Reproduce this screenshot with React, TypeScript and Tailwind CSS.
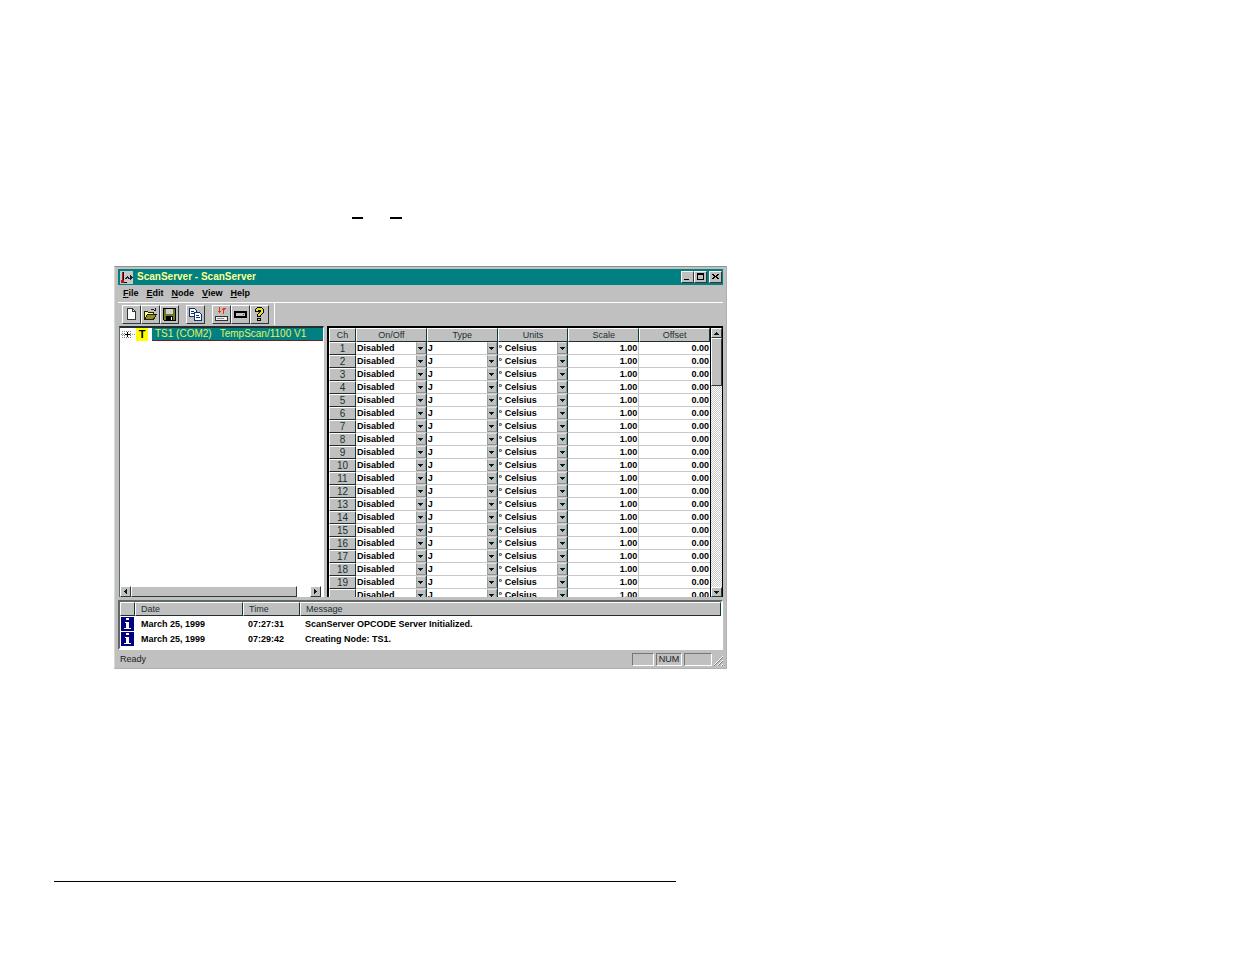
import type { ReactNode } from "react";

const raised = "border border-t-white border-l-white border-r-[#303838] border-b-[#303838] bg-[#c0c0c0]";
const sunken = "border border-t-[#707878] border-l-[#707878] border-r-white border-b-white";
const headCell = "border-t border-l border-r border-b border-t-white border-l-white border-r-[#103838] border-b-[#203030] bg-[#c0c0c0]";

const menus = ["File", "Edit", "Node", "View", "Help"];
const channels = Array.from({ length: 20 }, (_, i) => i + 1);
const log = [
  { date: "March 25, 1999", time: "07:27:31", message: "ScanServer OPCODE Server Initialized." },
  { date: "March 25, 1999", time: "07:29:42", message: "Creating Node: TS1." },
];

function Arrow({ dir }: { dir: "up" | "down" | "left" | "right" }) {
  const paths = {
    up: "M3 2h1v1h1v1h1v1H1V4h1V3h1z",
    down: "M1 2h5v1H5v1H4v1H3V4H2V3H1z",
    left: "M4 1h1v5H4V5H3V4H2V3h1V2h1z",
    right: "M2 1h1v1h1v1h1v1H4v1H3v1H2z",
  };
  return (
    <svg width="7" height="7" viewBox="0 0 7 7" shapeRendering="crispEdges" aria-hidden="true">
      <path d={paths[dir]} fill="#002020" />
    </svg>
  );
}

function WindowButton({ label, children }: { label: string; children: ReactNode }) {
  return (
    <button type="button" aria-label={label} className={`${raised} flex h-3 w-[13px] items-center justify-center`}>
      <svg width="9" height="8" viewBox="0 0 9 8" shapeRendering="crispEdges" className="flex-none">
        {children}
      </svg>
    </button>
  );
}

function Tool({ label, children }: { label: string; children: ReactNode }) {
  return (
    <button type="button" aria-label={label} className={`${raised} flex h-[19px] w-[19px] items-center justify-center`}>
      <svg width="15" height="15" viewBox="0 0 15 15" shapeRendering="crispEdges" className="flex-none">
        {children}
      </svg>
    </button>
  );
}

function Pick({ label, value }: { label: string; value: string }) {
  return (
    <div className="relative flex h-3">
      <select aria-label={label} defaultValue={value} className="h-3 w-full appearance-none bg-white pl-px text-[9px] leading-3 font-bold outline-none">
        <option>{value}</option>
      </select>
      <span className="pointer-events-none absolute top-0 right-0 flex h-3 w-2.5 items-center justify-center border border-t-[#e0e0e0] border-l-[#a0a0a0] border-r-[#909090] border-b-[#909090] bg-[#c0c0c0]">
        <Arrow dir="down" />
      </span>
    </div>
  );
}

function ChannelGrid() {
  return (
    <section className="flex h-[271px] min-w-0 flex-1 border-t-2 border-l-2 border-r border-black bg-white">
      <div className="min-w-0 flex-1 overflow-hidden">
        <table className="w-full table-fixed border-separate border-spacing-0 text-[9px] leading-3">
          <colgroup>
            <col className="w-[27px]" />
            <col />
            <col />
            <col />
            <col />
            <col />
          </colgroup>
          <thead>
            <tr className="h-[14px]">
              {["Ch", "On/Off", "Type", "Units", "Scale", "Offset"].map((h) => (
                <th key={h} className={`${headCell} h-[14px] p-0 text-[9px] leading-3 font-normal text-[#203030]`}>
                  {h}
                </th>
              ))}
            </tr>
          </thead>
          <tbody>
            {channels.map((ch) => (
              <tr key={ch} className="h-[13px]">
                <th className={`${headCell} h-[13px] p-0 text-[10px] leading-[11px] font-normal text-[#203030]`}>
                  {ch < channels.length ? ch : null}
                </th>
                <td className="border-r border-b border-r-[#103838] border-b-[#c8c8c8] p-0">
                  <Pick label={`Channel ${ch} on/off`} value="Disabled" />
                </td>
                <td className="border-r border-b border-r-[#103838] border-b-[#c8c8c8] p-0">
                  <Pick label={`Channel ${ch} type`} value="J" />
                </td>
                <td className="border-r border-b border-r-[#103838] border-b-[#c8c8c8] p-0">
                  <Pick label={`Channel ${ch} units`} value="° Celsius" />
                </td>
                <td className="border-r border-b border-[#c8c8c8] p-0 pr-px text-right font-bold">1.00</td>
                <td className="border-b border-[#c8c8c8] p-0 pr-px text-right font-bold">0.00</td>
              </tr>
            ))}
          </tbody>
        </table>
      </div>
      <div className="flex w-3 flex-col border-l border-black bg-[repeating-conic-gradient(#ffffff_0_25%,#c8c8c8_0_50%)] bg-[length:2px_2px]">
        <button type="button" aria-label="Scroll up" className={`${raised} flex h-2.5 w-full items-center justify-center`}>
          <Arrow dir="up" />
        </button>
        <div className={`${raised} h-12`} />
        <button type="button" aria-label="Scroll down" className={`${raised} mt-auto flex h-2.5 w-full items-center justify-center`}>
          <Arrow dir="down" />
        </button>
      </div>
    </section>
  );
}

function NodeTree() {
  return (
    <section className="flex h-[271px] w-[205px] flex-none flex-col border-t-2 border-r border-l border-t-[#203030] border-r-white border-l-[#606868] bg-white">
      <div className="flex h-[13px] items-center">
        <svg width="16" height="13" viewBox="0 0 16 13" shapeRendering="crispEdges" className="flex-none" aria-hidden="true">
          <path d="M2.500 3v7M1 6.500h3M10 6.500h6" stroke="#909090" strokeDasharray="1 1" />
          <path d="M4 3h1v1H4zM6 3h1v1H6zM8 3h1v1H8zM10 3h1v1h-1zM4 5h1v1H4zM4 7h1v1H4zM4 9h1v1H4zM6 9h1v1H6zM8 9h1v1H8zM10 5h1v1h-1zM10 7h1v1h-1zM10 9h1v1h-1z" fill="#808080" />
          <path d="M5 6.500h5M7.500 4v5" stroke="#000" />
        </svg>
        <span className="flex h-[13px] w-3 flex-none items-center justify-center bg-[#ffff00] text-[11px] leading-[13px] font-bold">T</span>
        <a href="#ts1" className="ml-1 flex h-[13px] flex-1 items-center gap-2 border-b border-[#702020] bg-[#008080] pl-[3px] text-[10px] leading-3 whitespace-nowrap text-[#e8f060]">
          <span>TS1 (COM2)</span>
          <span>TempScan/1100 V1</span>
        </a>
      </div>
      <div className="mt-auto flex h-[11px] w-full">
        <button type="button" aria-label="Scroll left" className={`${raised} flex w-[11px] items-center justify-center`}>
          <Arrow dir="left" />
        </button>
        <div className={`${raised} w-[166px]`} />
        <button type="button" aria-label="Scroll right" className={`${raised} mr-0.5 ml-auto flex w-[11px] items-center justify-center`}>
          <Arrow dir="right" />
        </button>
      </div>
    </section>
  );
}

function Toolbar() {
  return (
    <div className="flex h-[23px] items-center border-t border-white pl-1">
      <Tool label="New">
        <path d="M3.500 1.500h5l3 3v8h-8z" fill="#fff" stroke="#303838" />
        <path d="M8.500 2v2.500h3" fill="none" stroke="#303838" />
      </Tool>
      <Tool label="Open">
        <path d="M1.500 12.500v-8h3l1 1h5v2" fill="#ffff90" stroke="#202000" />
        <path d="M1.500 12.500l3-5h9l-3 5z" fill="#909020" stroke="#202000" />
        <path d="M8 2.500h3M11 3.500h2M12.500 1v3" fill="none" stroke="#202020" />
      </Tool>
      <Tool label="Save">
        <path d="M1.500 1.500h12v12h-11l-1-1z" fill="#707820" stroke="#000" />
        <path d="M4 2h7v5H4z" fill="#d0d0d0" />
        <path d="M4 9h7v4H4z" fill="#000" />
        <path d="M9 10h1v3H9z" fill="#fff" />
      </Tool>
      <span className="w-[7px]" />
      <Tool label="Copy">
        <path d="M1.500 1.500h5l2 2v6h-7z" fill="#fff" stroke="#103060" />
        <path d="M3 4.500h3M3 6.500h4" stroke="#103060" />
        <path d="M6.500 5.500h5l2 2v6h-7z" fill="#fff" stroke="#103080" />
        <path d="M8 8.500h3M8 10.500h4" stroke="#103080" />
      </Tool>
      <span className="w-[7px]" />
      <Tool label="Transfer">
        <path d="M5 0h1v6H5zM4 4h3v1H4zM9 1h1v6H9zM8 2h3v1H8zM10 1h2v1h-2z" fill="#f03010" />
        <path d="M1.500 9.500h12v4h-12z" fill="#f0f0f0" stroke="#303030" />
        <path d="M3 11.500h7" stroke="#909090" />
      </Tool>
      <Tool label="Device">
        <path d="M1 4h13v7H1z" fill="#000" />
        <path d="M3 6h9v3H3z" fill="#c0c0c0" />
        <path d="M10 7h1v1h-1z" fill="#206020" />
      </Tool>
      <Tool label="Help">
        <path d="M3 2h1V1h1V0h5v1h1v1h1v4h-1v1h-1v1H9v2H5V7h1V6h1V5H3zM5 11h4v3H5z" fill="#000" />
        <path d="M4 2h1V1h5v1h1v4h-1v1H9v1H8v1H6V7h1V6h1V5h1V3H6v1H4zM6 12h2v1H6z" fill="#e8e020" />
      </Tool>
      <span className="ml-[5px] h-full w-px bg-white" />
    </div>
  );
}

function MessageLog() {
  return (
    <section className="mt-[3px] h-[50px] border-2 border-t-[#606868] border-r-white border-b-white border-l-[#606868] bg-white">
      <table className="w-full table-fixed border-separate border-spacing-0 text-[9px] leading-3">
        <colgroup>
          <col className="w-[15px]" />
          <col className="w-[108px]" />
          <col className="w-[57px]" />
          <col />
        </colgroup>
        <thead>
          <tr className="h-[14px] text-left text-[#203030]">
            <th aria-label="Severity" className={`${headCell} p-0`} />
            {["Date", "Time", "Message"].map((h) => (
              <th key={h} className={`${headCell} h-[14px] p-0 pl-[5px] text-[9px] font-normal`}>
                {h}
              </th>
            ))}
          </tr>
        </thead>
        <tbody>
          {log.map((entry) => (
            <tr key={entry.time} className="h-[15px] font-bold">
              <td className="p-0 pl-px">
                <svg width="13" height="14" viewBox="0 0 13 14" shapeRendering="crispEdges" className="block" role="img" aria-label="Information">
                  <path d="M0 0h13v14H0z" fill="#000080" />
                  <path d="M5 1h3v2H5zM4 5h4v6h2v1H3v-1h2V6H4z" fill="#fff" />
                </svg>
              </td>
              <td className="p-0 pl-1.5">{entry.date}</td>
              <td className="p-0 pl-[5px]">{entry.time}</td>
              <td className="p-0 pl-[5px]">{entry.message}</td>
            </tr>
          ))}
        </tbody>
      </table>
    </section>
  );
}

export default function App() {
  return (
    <main className="min-h-screen bg-white pt-[217px] font-['Liberation_Sans',Arial,sans-serif] text-black">
      <div className="flex gap-[27px] pl-[352px]" aria-hidden="true">
        <span className="h-0.5 w-[11px] bg-black" />
        <span className="h-0.5 w-3 bg-black" />
      </div>

      <div className="mt-[47px] ml-[114px] w-full max-w-[613px] border border-t-[#909090] border-r-[#b0b0b0] border-b-[#b0b0b0] border-l-[#d8d8d8] bg-[#c0c0c0] px-[3px] pt-0.5">
        <header className="flex h-4 items-center bg-[#008080] pr-px pl-0.5">
          <svg width="13" height="13" viewBox="0 0 13 13" shapeRendering="crispEdges" className="mr-1 flex-none" aria-hidden="true">
            <path d="M0 0h13v13H0z" fill="#c8c8c8" />
            <path d="M2 1h1v8H2zM1 9h3v3H1z" fill="#c01010" />
            <path d="M3 1h1v8H3zM4 11h3v1H4z" fill="#000" />
            <path d="M5 7h1V6h1V5h1v1h1v1h1V4h1v1h1v1h1v1h-1v1h-1v1h-1V8H8V7H7v1H5z" fill="#202020" />
          </svg>
          <h1 className="flex-1 text-[10px] leading-4 font-bold text-[#ffff90]">ScanServer - ScanServer</h1>
          <WindowButton label="Minimize">
            <path d="M1 6h5v1H1z" />
          </WindowButton>
          <WindowButton label="Maximize">
            <path fillRule="evenodd" d="M1 0h7v7H1zM2 2v4h5V2z" />
          </WindowButton>
          <span className="w-0.5" />
          <WindowButton label="Close">
            <path d="M1 1h2v1h1v1h1V2h1V1h2v1H7v1H6v1h1v1h1v1H6V5H5V4H4v1H3v1H1V5h1V4h1V3H2V2H1z" />
          </WindowButton>
        </header>

        <nav className="flex h-[17px] items-center gap-2 pb-0.5 pl-[5px]">
          {menus.map((m) => (
            <button key={m} type="button" className="text-[9px] leading-3 font-bold">
              <span className="underline">{m[0]}</span>
              {m.slice(1)}
            </button>
          ))}
        </nav>

        <Toolbar />

        <div className="mt-px flex gap-[3px] pl-px">
          <NodeTree />
          <ChannelGrid />
        </div>

        <MessageLog />

        <footer className="flex h-[18px] items-center gap-0.5 pl-0.5 text-[9px] leading-3 text-[#202020]">
          <span className="flex-1">Ready</span>
          <span className={`${sunken} h-[13px] w-[22px]`} />
          <span className={`${sunken} flex h-[13px] w-[26px] items-center justify-center`}>NUM</span>
          <span className={`${sunken} h-[13px] w-7`} />
          <svg width="9" height="12" viewBox="0 0 9 12" className="mt-1" aria-hidden="true">
            <path d="M0 11L9 2M4 11l5-5M8 11l1-1" stroke="#808080" />
            <path d="M0 10L9 1M3 11l6-6M7 11l2-2" stroke="#fff" />
          </svg>
        </footer>
      </div>

      <hr className="mt-[212px] ml-[54px] w-full max-w-[622px] border-black" />
    </main>
  );
}
